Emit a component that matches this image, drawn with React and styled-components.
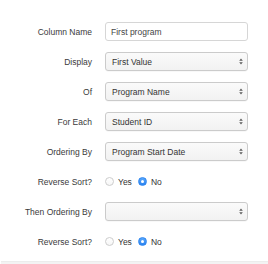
import React from 'react'
import styled, { createGlobalStyle } from 'styled-components'

const Global = createGlobalStyle`
  html, body { margin: 0; padding: 0; background: #fff; }
  body { font-family: "Liberation Sans", Arial, sans-serif; }
`

const rows = [
  { label: 'Column Name', kind: 'input', value: 'First program' },
  { label: 'Display', kind: 'select', value: 'First Value' },
  { label: 'Of', kind: 'select', value: 'Program Name' },
  { label: 'For Each', kind: 'select', value: 'Student ID' },
  { label: 'Ordering By', kind: 'select', value: 'Program Start Date' },
  { label: 'Reverse Sort?', kind: 'radio', value: 'No' },
  { label: 'Then Ordering By', kind: 'select', value: '' },
  { label: 'Reverse Sort?', kind: 'radio', value: 'No' },
]

function Arrows() {
  return (
    <svg width="4" height="7" viewBox="0 0 4 7">
      <path d="M2 0.5 L3.8 2.8 L0.2 2.8 Z" fill="#5a5a5a" />
      <path d="M2 6.5 L3.8 4.2 L0.2 4.2 Z" fill="#5a5a5a" />
    </svg>
  )
}

function Radio({ checked, label }) {
  return (
    <RadioOption>
      <RadioDot $checked={checked} />
      <span>{label}</span>
    </RadioOption>
  )
}

function Field({ row }) {
  if (row.kind === 'input') return <TextBox>{row.value}</TextBox>
  if (row.kind === 'select')
    return (
      <SelectBox>
        <span>{row.value}</span>
        <Arrows />
      </SelectBox>
    )
  return (
    <RadioGroup>
      <Radio label="Yes" checked={row.value === 'Yes'} />
      <Radio label="No" checked={row.value === 'No'} />
    </RadioGroup>
  )
}

export default function App() {
  return (
    <>
      <Global />
      <Page>
        <Form>
          {rows.map((row, i) => (
            <React.Fragment key={i}>
              <Label>{row.label}</Label>
              <Field row={row} />
            </React.Fragment>
          ))}
        </Form>
        <Footer />
      </Page>
    </>
  )
}

const Page = styled.div`
  width: 268px;
  height: 264px;
  display: flex;
  flex-direction: column;
  overflow: hidden;
`

const Form = styled.div`
  display: grid;
  grid-template-columns: 92px 143px;
  grid-auto-rows: 19px;
  column-gap: 13px;
  row-gap: 11px;
  padding-top: 22px;
  font-size: 8.5px;
`

const Label = styled.div`
  display: flex;
  align-items: center;
  justify-content: flex-end;
  color: #3a3a3a;
`

const TextBox = styled.div`
  box-sizing: border-box;
  display: flex;
  align-items: center;
  padding: 0 5px;
  border: 1px solid #d6d6d6;
  border-radius: 3px;
  background: #fff;
  color: #444;
`

const SelectBox = styled(TextBox)`
  justify-content: space-between;
  padding: 0 4px 0 6px;
  border-color: #cbcbcb;
  background: linear-gradient(#fafafa, #f2f2f2);
  color: #333;
  box-shadow: 0 0.5px 0.5px rgba(0, 0, 0, 0.06);
`

const RadioGroup = styled.div`
  display: flex;
  align-items: center;
  gap: 6px;
  color: #333;
`

const RadioOption = styled.label`
  display: flex;
  align-items: center;
  gap: 4px;
`

const RadioDot = styled.span`
  box-sizing: border-box;
  width: 9px;
  height: 9px;
  border-radius: 50%;
  position: relative;
  border: ${p => (p.$checked ? '1px solid #2e86f0' : '1px solid #cdcdcd')};
  background: ${p => (p.$checked ? 'linear-gradient(#5aa8fb, #2a82ef)' : 'linear-gradient(#fff, #f6f6f6)')};
  &::after {
    content: '';
    display: ${p => (p.$checked ? 'block' : 'none')};
    position: absolute;
    left: 50%;
    top: 50%;
    width: 3px;
    height: 3px;
    margin: -1.5px 0 0 -1.5px;
    border-radius: 50%;
    background: #fff;
  }
`

const Footer = styled.div`
  margin-top: 10px;
  margin-left: 1px;
  flex: 1;
  background: #f3f3f3;
  border-top: 1px solid #ececec;
`
